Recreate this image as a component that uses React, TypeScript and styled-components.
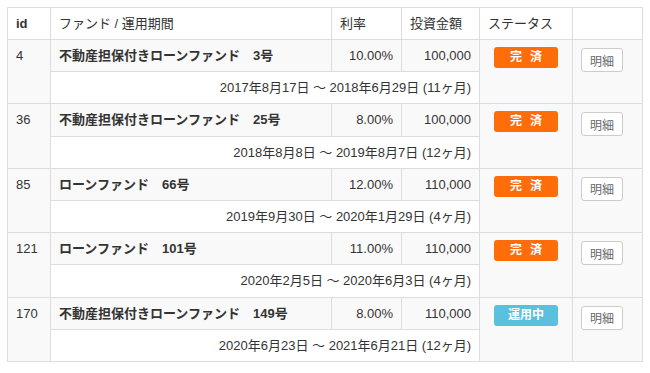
import styled, { createGlobalStyle } from "styled-components";

const GlobalStyle = createGlobalStyle`
	body {
		margin: 0;
		background: #fff;
		font-family: "Liberation Sans", "Noto Sans CJK JP", sans-serif;
		color: #333;
	}
`;

type Fund = {
	id: number;
	name: string;
	no: string;
	rate: string;
	amount: string;
	period: string;
	status: "done" | "active";
};

const funds: Fund[] = [
	{
		id: 4,
		name: "不動産担保付きローンファンド",
		no: "3号",
		rate: "10.00%",
		amount: "100,000",
		period: "2017年8月17日 〜 2018年6月29日 (11ヶ月)",
		status: "done",
	},
	{
		id: 36,
		name: "不動産担保付きローンファンド",
		no: "25号",
		rate: "8.00%",
		amount: "100,000",
		period: "2018年8月8日 〜 2019年8月7日 (12ヶ月)",
		status: "done",
	},
	{
		id: 85,
		name: "ローンファンド",
		no: "66号",
		rate: "12.00%",
		amount: "110,000",
		period: "2019年9月30日 〜 2020年1月29日 (4ヶ月)",
		status: "done",
	},
	{
		id: 121,
		name: "ローンファンド",
		no: "101号",
		rate: "11.00%",
		amount: "110,000",
		period: "2020年2月5日 〜 2020年6月3日 (4ヶ月)",
		status: "done",
	},
	{
		id: 170,
		name: "不動産担保付きローンファンド",
		no: "149号",
		rate: "8.00%",
		amount: "110,000",
		period: "2020年6月23日 〜 2021年6月21日 (12ヶ月)",
		status: "active",
	},
];

const Page = styled.div`
	padding: 7px;
`;

const Table = styled.table`
	width: 635px;
	table-layout: fixed;
	border-collapse: collapse;
	border: 1px solid #ddd;
	font-size: 13px;
	line-height: 19.2px;
`;

const Th = styled.th<{ $bold?: boolean }>`
	text-align: left;
	padding: 6px 8px;
	line-height: 19px;
	border: 1px solid #ddd;
	font-weight: ${(p) => (p.$bold ? 700 : 400)};
	background: #fff;
`;

const MainRow = styled.tr`
	background: #f9f9f9;
`;

const DateRow = styled.tr`
	background: #fff;
`;

const Td = styled.td<{ $right?: boolean }>`
	padding: 6px 8px;
	border: 1px solid #ddd;
	vertical-align: top;
	text-align: ${(p) => (p.$right ? "right" : "left")};
	white-space: nowrap;
`;

const FundName = styled.strong`
	font-weight: 700;
	& > span {
		margin-left: 13px;
	}
`;

const Badge = styled.span<{ $active?: boolean }>`
	display: block;
	width: 64px;
	height: 21px;
	margin: 1px 0 0 6px;
	border-radius: 3px;
	background: ${(p) => (p.$active ? "#5bc0de" : "#ff6c0a")};
	color: #fff;
	font-size: 12px;
	font-weight: 700;
	line-height: 21px;
	text-align: center;
	letter-spacing: ${(p) => (p.$active ? "0" : "8px")};
	text-indent: ${(p) => (p.$active ? "0" : "8px")};
`;

const DetailButton = styled.button`
	display: block;
	width: 42px;
	height: 24px;
	margin: 2px 0 0 0;
	padding: 0;
	border: 1px solid #ccc;
	border-radius: 3px;
	background: #fff;
	color: #666;
	font-family: inherit;
	font-size: 12px;
`;

export default function App() {
	return (
		<Page>
			<GlobalStyle />
			<Table>
				<colgroup>
					<col style={{ width: 43 }} />
					<col style={{ width: 281 }} />
					<col style={{ width: 70 }} />
					<col style={{ width: 78 }} />
					<col style={{ width: 93 }} />
					<col style={{ width: 70 }} />
				</colgroup>
				<thead>
					<tr>
						<Th $bold>id</Th>
						<Th>ファンド / 運用期間</Th>
						<Th>利率</Th>
						<Th>投資金額</Th>
						<Th>ステータス</Th>
						<Th />
					</tr>
				</thead>
				{funds.map((f) => (
					<tbody key={f.id}>
						<MainRow>
							<Td rowSpan={2}>{f.id}</Td>
							<Td>
								<FundName>
									{f.name}
									<span>{f.no}</span>
								</FundName>
							</Td>
							<Td $right>{f.rate}</Td>
							<Td $right>{f.amount}</Td>
							<Td rowSpan={2}>
								<Badge $active={f.status === "active"}>
									{f.status === "active" ? "運用中" : "完済"}
								</Badge>
							</Td>
							<Td rowSpan={2}>
								<DetailButton>明細</DetailButton>
							</Td>
						</MainRow>
						<DateRow>
							<Td colSpan={3} $right>
								{f.period}
							</Td>
						</DateRow>
					</tbody>
				))}
			</Table>
		</Page>
	);
}
